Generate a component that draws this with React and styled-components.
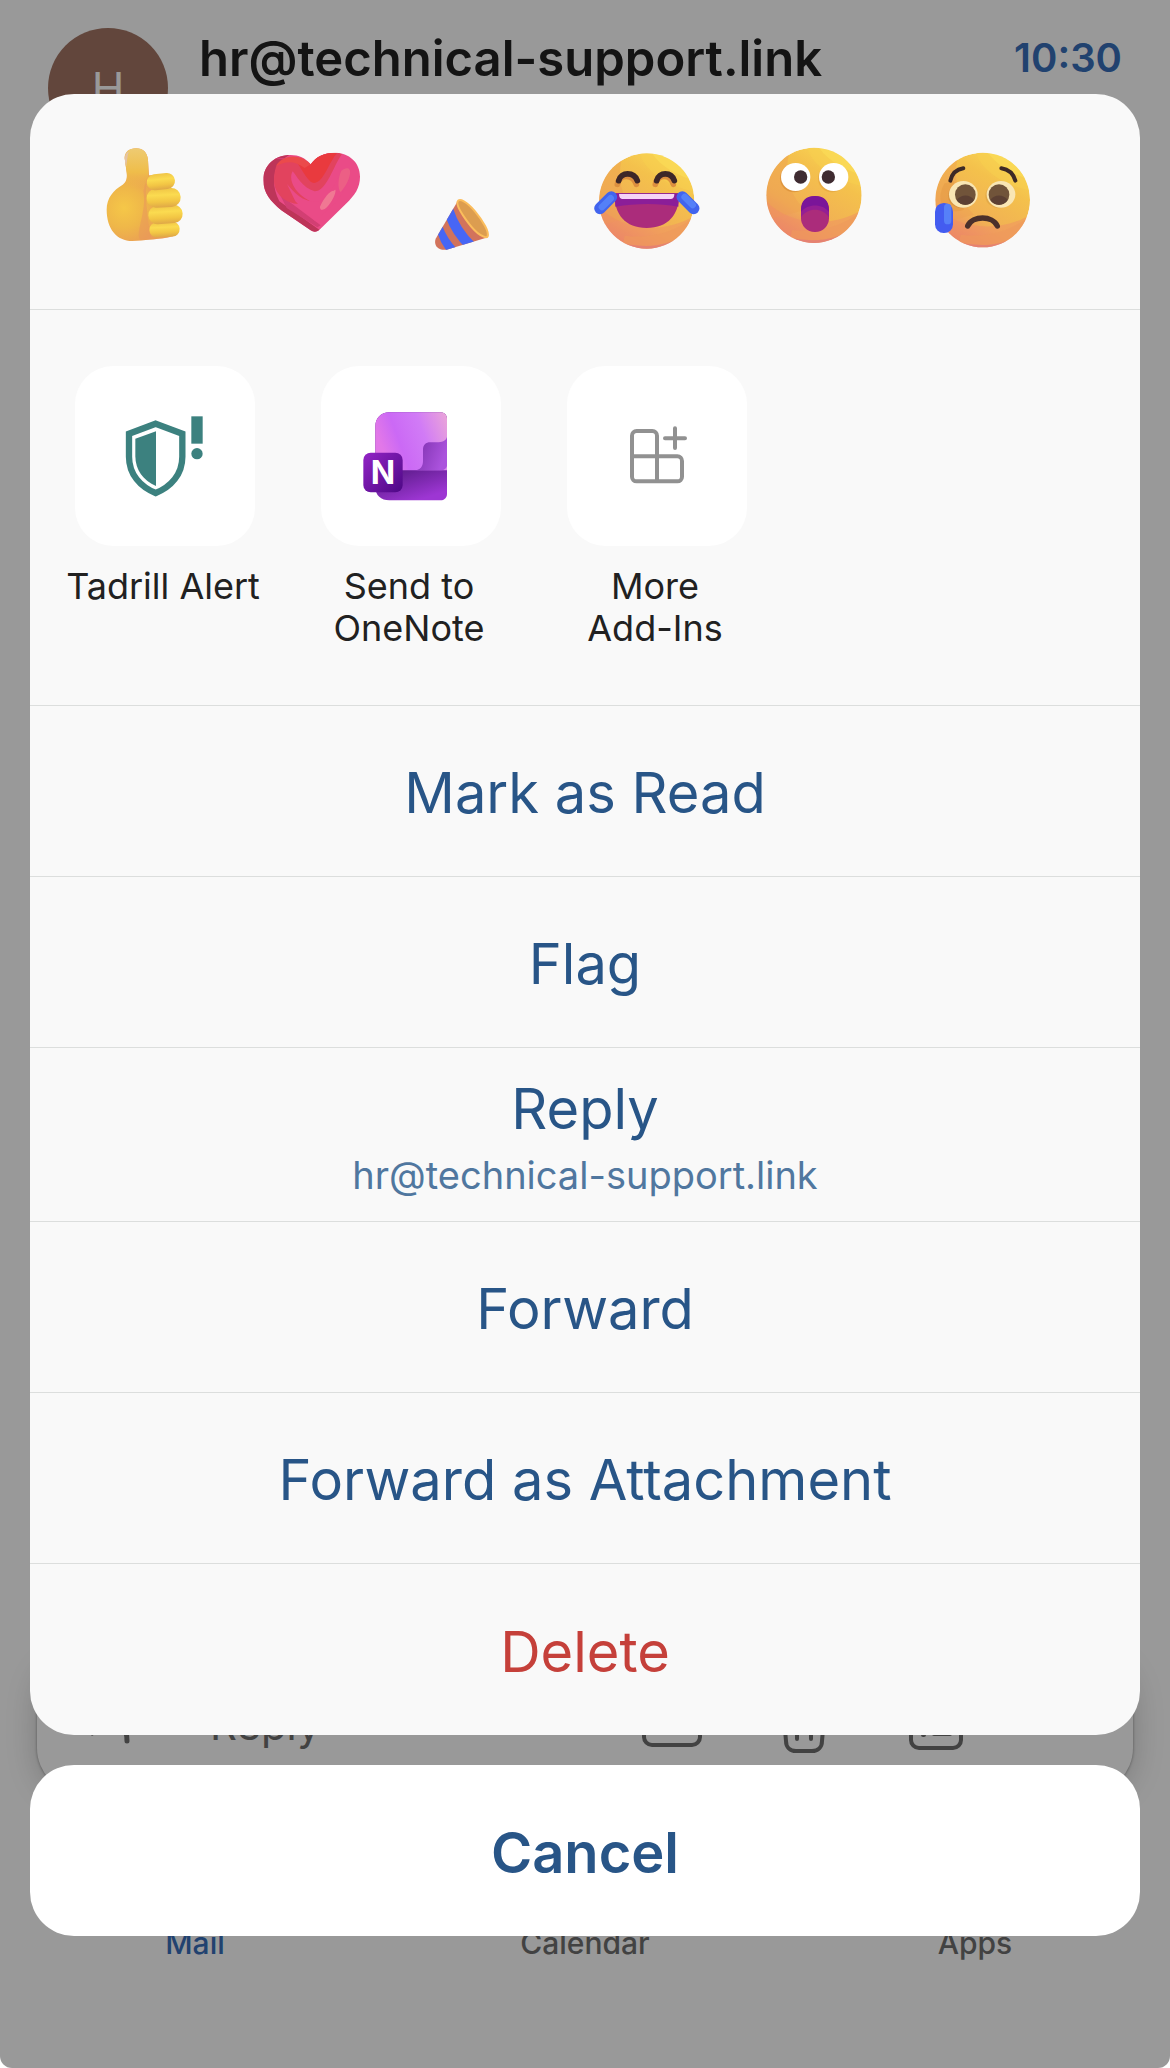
import React, { useState } from 'react';
import styled, { createGlobalStyle } from 'styled-components';

const GlobalStyle = createGlobalStyle`
  * { box-sizing: border-box; }
  body { margin: 0; background: #fff; font-family: Inter, "Liberation Sans", sans-serif; }
  button { font-family: inherit; border: none; background: none; padding: 0; cursor: pointer; }
  svg { display: block; }
`;

/* mail app behind the sheet */
const Screen = styled.div`
  display: grid;
  min-height: 100vh;
`;
const MailView = styled.div`
  grid-area: 1 / 1;
  display: flex;
  flex-direction: column;
  justify-content: space-between;
`;
const Header = styled.header`
  display: flex;
  align-items: flex-start;
  padding: 28px 48px 0;
`;
const Avatar = styled.div`
  display: flex; align-items: center; justify-content: center;
  width: 120px; height: 120px; margin-right: 31px;
  border-radius: 50%;
  background: #a37564;
  color: #fff;
  font-size: 44px;
`;
const Sender = styled.h1`
  flex: 1;
  margin: 0;
  font-size: 49px; line-height: 62px; font-weight: 600;
  color: #222;
`;
const Time = styled.time`
  font-size: 40px; line-height: 60px; font-weight: 600;
  color: #376eba;
`;
const BottomArea = styled.div`
  display: flex;
  flex-direction: column;
`;
const ReplyBar = styled.div`
  display: flex;
  align-items: center;
  gap: 72px;
  height: 140px;
  margin: 0 37px;
  padding: 0 167px 0 32px;
  border-radius: 46px;
  background: #fff;
  box-shadow: 0 0 3px rgba(0, 0, 0, 0.4), 0 4px 32px rgba(0, 0, 0, 0.2);
  color: #6e6e6e;
`;
const ReplyField = styled.button`
  flex: 1;
  display: flex; align-items: center; gap: 66px;
  font-size: 42px;
  color: inherit;
`;
const BarButton = styled.button`
  color: inherit;
`;
const TabBar = styled.nav`
  display: grid;
  grid-template-columns: repeat(3, 1fr);
  height: 274px;
  padding-top: 131px;
`;
const Tab = styled.a`
  text-align: center;
  text-decoration: none;
  font-size: 30px; line-height: 36px; font-weight: 500;
  color: ${(p) => (p.$active ? '#376eba' : '#6e6e6e')};
`;

/* action sheet */
const Scrim = styled.div`
  grid-area: 1 / 1;
  z-index: 1;
  display: flex;
  flex-direction: column;
  justify-content: flex-end;
  gap: 30px;
  padding: 94px 30px 132px;
  border-radius: 0 0 12px 12px;
  background: rgba(0, 0, 0, 0.4);
`;
const Sheet = styled.section`
  border-radius: 44px;
  background: #f9f9f9;
  overflow: hidden;
`;
const Reactions = styled.div`
  display: grid;
  grid-template-columns: repeat(6, 1fr);
  padding: 44px 72px 51px 30px;
  border-bottom: 1px solid #dcdedd;
`;
const ReactionButton = styled.button`
  display: flex;
  justify-content: center;
`;
const AddIns = styled.div`
  display: flex;
  padding: 56px 12px 56px;
  border-bottom: 1px solid #dcdedd;
`;
const AddInButton = styled.button`
  display: flex;
  flex-direction: column;
  align-items: center;
  width: 246px;
`;
const Tile = styled.span`
  width: 180px; height: 180px;
  margin-bottom: 19px;
  border-radius: 38px;
  background: #fff;
`;
const AddInLabel = styled.span`
  min-height: 84px;
  padding-right: 4px;
  font-size: 36px; line-height: 42px;
  white-space: pre-line;
  color: #212121;
`;
const Action = styled.button`
  display: flex;
  flex-direction: column;
  align-items: center;
  justify-content: center;
  width: 100%;
  min-height: 171px;
  padding: 4px 0 0;
  font-size: 56px; line-height: 80px;
  color: ${(p) => (p.$danger ? '#c5403a' : '#285587')};

  &:not(:last-child) { border-bottom: 1px solid #dcdedd; }
`;
const ReplyAction = styled(Action)`
  min-height: 174px;
  padding: 0;
`;
const ActionNote = styled.span`
  font-size: 38px; line-height: 52px;
  color: #50779f;
`;
const CancelButton = styled(Action)`
  border-radius: 44px;
  background: #fff;
  font-weight: 600;
`;

function ThumbIcon() {
  return (
    <svg width="120" height="120" viewBox="0 0 360 360" aria-hidden="true">
      <defs>
        <radialGradient id="palm" gradientUnits="userSpaceOnUse" cx="120" cy="210" r="120">
          <stop offset="0" stopColor="#f5c748" />
          <stop offset="0.5" stopColor="#efb749" />
          <stop offset="1" stopColor="#ea9d55" />
        </radialGradient>
        <linearGradient id="thumbTip" x1="0" y1="0" x2="0" y2="1">
          <stop offset="0" stopColor="#eecb72" />
          <stop offset="0.6" stopColor="#efbd4a" />
          <stop offset="1" stopColor="#efb749" stopOpacity="0" />
        </linearGradient>
        <linearGradient id="finger" x1="0" y1="0" x2="0" y2="1">
          <stop offset="0" stopColor="#f0c546" />
          <stop offset="0.35" stopColor="#fbdb50" />
          <stop offset="0.7" stopColor="#f2c544" />
          <stop offset="1" stopColor="#dfa847" />
        </linearGradient>
      </defs>
      <path d="M122 60C122 42 136 31 156 31C178 31 190 44 192 66L195 112L235 112L275 290C262 300 225 303 145 309C98 309 68 272 68 215C68 180 88 156 116 140C128 132 131 118 127 96Z" fill="url(#palm)" />
      <path d="M122 60C122 42 136 31 156 31C178 31 190 44 192 66L195 150H112C130 135 131 118 127 96Z" fill="url(#thumbTip)" />
      <path d="M123 56C126 45 130 42 134 42C130 55 129 70 127 85C123 78 122 66 123 56Z" fill="#e5c4a5" />
      <path d="M192 110C180 150 188 230 202 302L170 306C150 290 190 220 178 160Z" fill="#e9985b" opacity="0.55" />
      <rect x="196" y="252" width="91" height="45" rx="22" fill="url(#finger)" transform="rotate(-3 240 274)" />
      <rect x="193" y="202" width="103" height="55" rx="27" fill="url(#finger)" transform="rotate(-4 244 230)" />
      <rect x="188" y="151" width="102" height="57" rx="28" fill="url(#finger)" transform="rotate(-3 240 180)" />
      <rect x="188" y="107" width="85" height="48" rx="24" fill="url(#finger)" transform="rotate(-6 230 130)" />
    </svg>
  );
}

function HeartIcon() {
  return (
    <svg width="120" height="120" viewBox="0 0 360 360" aria-hidden="true">
      <defs>
        <clipPath id="heartClip">
          <path d="M176 79C160 60 140 51 116 51C68 51 34 82 34 126C34 165 56 190 88 217L176 277C184 283 196 283 204 274L282 197C308 172 324 150 324 116C324 73 291 44 248 44C216 44 192 56 176 79Z" />
        </clipPath>
      </defs>
      <g clipPath="url(#heartClip)">
        <rect width="360" height="360" fill="#ea4b87" />
        <path d="M20 40H130C70 70 48 120 82 190L206 278L180 300L20 200Z" fill="#bd3559" />
        <path d="M60 60H130C90 76 64 110 78 158L104 210L196 268L206 262L110 190C80 150 90 90 130 70Z" fill="#d23f73" />
        <path d="M72 86C90 58 130 48 176 79C215 30 250 40 270 48C245 80 225 160 188 160C150 150 132 110 122 100C110 120 120 160 172 188C130 215 66 180 66 128C66 112 68 98 72 86Z" fill="#e2435e" />
        <path d="M125 60L176 79C190 50 225 40 255 46C232 70 215 134 187 135C166 134 150 90 125 60Z" fill="#e93a3e" />
        <path d="M72 84C82 64 112 50 140 58C160 62 168 72 176 79L158 90C130 68 102 68 72 84Z" fill="#eb4a4b" />
        <path d="M105 138C130 170 165 200 205 188C245 170 262 90 290 90C304 96 286 150 250 195L190 250L130 190Z" fill="#ea4b87" />
        <path d="M246 158C256 146 250 180 228 204C214 220 203 218 204 206C216 180 232 158 246 158Z" fill="#f07893" />
        <path d="M268 98C282 86 298 88 294 108C290 130 278 148 266 162C256 154 258 118 268 98Z" fill="#ec5f85" />
      </g>
    </svg>
  );
}

function PartyIcon() {
  return (
    <svg width="120" height="120" viewBox="0 0 360 360" aria-hidden="true">
      <defs>
        <clipPath id="coneClip">
          <path d="M115 186L204 298L80 335C54 339 40 322 47 302Z" />
        </clipPath>
      </defs>
      <g clipPath="url(#coneClip)">
        <rect width="360" height="360" fill="#d2735c" />
        <path d="M98 208Q118 272 168 318L142 336Q96 290 78 240Z" fill="#4766f5" />
        <path d="M66 262Q82 304 112 334L84 344Q62 316 52 284Z" fill="#4766f5" />
      </g>
      <path d="M113 190C118 180 140 190 165 220C190 250 208 282 203 295C196 304 170 288 146 256C122 224 108 200 113 190Z" fill="#dc9d50" stroke="#fbbd5c" strokeWidth="6" />
    </svg>
  );
}

/* shared round face, each id keeps its own gradient and clip */
function Face({ id, cx, cy, r }) {
  return (
    <>
      <defs>
        <linearGradient id={`${id}Fill`} x1="0.85" y1="0.05" x2="0.3" y2="0.98">
          <stop offset="0" stopColor="#f9d855" />
          <stop offset="0.3" stopColor="#f4c14c" />
          <stop offset="0.7" stopColor="#f1b054" />
          <stop offset="1" stopColor="#ea826a" />
        </linearGradient>
        <clipPath id={`${id}Clip`}>
          <circle cx={cx} cy={cy} r={r} />
        </clipPath>
      </defs>
      <g clipPath={`url(#${id}Clip)`}>
        <circle cx={cx} cy={cy} r={r} fill={`url(#${id}Fill)`} />
        <g transform={`translate(${cx - 176} ${cy - 186})`}>
          <path d="M155 40C165 90 230 140 320 158V40Z" fill="#f8cf4e" opacity="0.5" />
          <path d="M190 40C220 90 280 112 330 130V40Z" fill="#fde35c" opacity="0.45" />
          <path d="M30 120C40 80 70 55 104 50C86 110 96 180 150 230L30 260Z" fill="#eda052" opacity="0.45" />
          <path d="M30 200C90 270 220 290 320 230L300 330H50Z" fill="#ef8b66" opacity="0.45" />
          <path d="M110 290C190 300 250 280 312 240L260 340H100Z" fill="#ee9a5c" opacity="0.6" />
          <path d="M60 300C150 330 230 330 290 285L240 340H100Z" fill="#df7381" opacity="0.55" />
        </g>
      </g>
    </>
  );
}

function LaughIcon() {
  return (
    <svg width="120" height="120" viewBox="0 0 360 360" aria-hidden="true">
      <Face id="laugh" cx={176} cy={189} r={143} />
      <path d="M91 134C98 102 138 102 148 134M205 134C212 102 250 102 259 134" transform="translate(-3 5)" fill="none" stroke="#dc8f3f" strokeWidth="17" strokeLinecap="round" />
      <path d="M92 128C99 101 138 101 148 128M206 128C213 101 250 101 259 128" fill="none" stroke="#3d2728" strokeWidth="17" strokeLinecap="round" />
      <path d="M80 166H273C275 230 240 270 176 270C112 270 78 230 80 166Z" fill="#ab2c7b" />
      <path d="M80 166H273L271 206C210 194 140 196 82 206Z" fill="#8b1e98" />
      <path d="M93 168H259C259 178 255 183 248 183H104C97 183 93 178 93 168Z" fill="#f6d3f7" />
      <path d="M36 211L70 177M283 177L317 211" stroke="#4164ee" strokeWidth="35" strokeLinecap="round" />
      <path d="M42 207L68 181M290 177L314 201" stroke="#5480f8" strokeWidth="20" strokeLinecap="round" />
    </svg>
  );
}

function SurprisedIcon() {
  return (
    <svg width="120" height="120" viewBox="0 0 360 360" aria-hidden="true">
      <Face id="surprised" cx={174} cy={172} r={143} />
      <circle cx="114" cy="121" r="42" fill="#d98f38" opacity="0.7" />
      <circle cx="228" cy="121" r="42" fill="#e2a13d" opacity="0.6" />
      <ellipse cx="119" cy="117" rx="44" ry="42" fill="#fff" />
      <ellipse cx="233" cy="117" rx="44" ry="42" fill="#fff" />
      <circle cx="134" cy="117" r="20" fill="#3f2c31" />
      <circle cx="217" cy="117" r="20" fill="#3f2c31" />
      <rect x="135" y="174" width="84" height="108" rx="41" fill="#ab2c7b" />
      <path d="M135 232V215C135 187 152 174 177 174C202 174 219 187 219 215V232C200 205 154 205 135 232Z" fill="#7a1599" />
      <path d="M135 238V222C154 196 200 196 219 222V238C200 208 154 208 135 238Z" fill="#941f94" />
    </svg>
  );
}

function SadIcon() {
  return (
    <svg width="120" height="120" viewBox="0 0 360 360" aria-hidden="true">
      <Face id="sad" cx={176} cy={186} r={142} />
      <path d="M62 136C30 190 60 235 120 215L90 130Z" fill="#e0913b" opacity="0.35" />
      <path d="M79 128C84 108 98 94 118 91M232 91C254 94 268 108 274 128" fill="none" stroke="#3d2a26" strokeWidth="12" strokeLinecap="round" />
      <ellipse cx="114" cy="173" rx="42" ry="38" fill="#d28f3c" opacity="0.6" />
      <ellipse cx="226" cy="173" rx="42" ry="38" fill="#d9a044" opacity="0.6" />
      <ellipse cx="118" cy="169" rx="43" ry="40" fill="#f9e6b4" />
      <ellipse cx="231" cy="169" rx="43" ry="40" fill="#f9e6b4" />
      <circle cx="124" cy="170" r="31" fill="#71543a" />
      <circle cx="225" cy="170" r="31" fill="#71543a" />
      <path d="M98 186A31 31 0 0 0 150 186C140 168 110 168 98 186ZM199 186A31 31 0 0 0 251 186C240 168 210 168 199 186Z" fill="#5c4033" />
      <path d="M131 264C146 232 206 232 220 264" fill="none" stroke="#4b302b" strokeWidth="16" strokeLinecap="round" />
      <rect x="33" y="195" width="54" height="90" rx="26" fill="#435cf0" />
      <rect x="60" y="197" width="22" height="62" rx="11" fill="#5680f8" />
    </svg>
  );
}

function ShieldIcon() {
  return (
    <svg width="180" height="180" viewBox="0 0 540 540" aria-hidden="true">
      <path d="M242 173L322 203V272C322 325 288 362 242 381C196 362 162 325 162 272V203Z" fill="none" stroke="#3c817f" strokeWidth="19" />
      <path d="M243 196V360C205 344 181 312 181 270V218Z" fill="#3c817f" />
      <rect x="349" y="151" width="34" height="82" fill="#3c817f" />
      <circle cx="366" cy="263" r="17" fill="#3c817f" />
    </svg>
  );
}

function OneNoteIcon() {
  return (
    <svg width="180" height="180" viewBox="0 0 540 540" aria-hidden="true">
      <defs>
        <linearGradient id="noteTop" x1="0" y1="0.3" x2="1" y2="0">
          <stop offset="0" stopColor="#e278e8" />
          <stop offset="0.25" stopColor="#cb69f5" />
          <stop offset="0.6" stopColor="#d17bf6" />
          <stop offset="1" stopColor="#eba6d8" />
        </linearGradient>
        <linearGradient id="noteMid" x1="0" y1="0" x2="1" y2="0.4">
          <stop offset="0" stopColor="#7a2daa" />
          <stop offset="1" stopColor="#ab53dd" />
        </linearGradient>
        <linearGradient id="noteBottom" gradientUnits="userSpaceOnUse" x1="260" y1="313" x2="290" y2="403">
          <stop offset="0" stopColor="#641f93" />
          <stop offset="1" stopColor="#9d36d3" />
        </linearGradient>
        <linearGradient id="noteBadge" x1="0" y1="0" x2="1" y2="1">
          <stop offset="0" stopColor="#9324c6" />
          <stop offset="1" stopColor="#4d0885" />
        </linearGradient>
      </defs>
      <path d="M205 139H358C370 139 378 147 378 159V383C378 395 370 403 358 403H205C180 403 163 388 163 363V181C163 156 180 139 205 139Z" fill="url(#noteBottom)" />
      <path d="M205 139H358C370 139 378 147 378 159V313H163V181C163 156 180 139 205 139Z" fill="url(#noteTop)" />
      <path d="M378 213C374 226 362 229 348 229H328C314 229 306 237 306 251V285C306 301 298 313 280 313H360C370 313 376 307 378 300Z" fill="url(#noteMid)" />
      <rect x="127" y="260" width="118" height="119" rx="22" fill="url(#noteBadge)" />
      <text x="186" y="354" textAnchor="middle" fontFamily="Inter, sans-serif" fontWeight="700" fontSize="96" fill="#fff">N</text>
    </svg>
  );
}

function MoreAddInsIcon() {
  return (
    <svg width="180" height="180" viewBox="0 0 540 540" fill="none" stroke="#919191" strokeWidth="12" strokeLinecap="round" aria-hidden="true">
      <path d="M195 271V209C195 201 201 195 209 195H256C264 195 270 201 270 209V271M195 271V332C195 340 201 346 209 346H331C339 346 345 340 345 332V285C345 277 339 271 331 271H195M270 271V346" />
      <path d="M324 187V246M294 217H354" />
    </svg>
  );
}

function ReplyArrowIcon() {
  return (
    <svg width="75" height="60" viewBox="-13 0 75 60" fill="none" stroke="currentColor" strokeWidth="5" strokeLinecap="round" aria-hidden="true">
      <path d="M10 13L-4 26L10 39M-4 26H28C39 26 45 33 45 47" />
    </svg>
  );
}

function MailIcon() {
  return (
    <svg width="60" height="60" viewBox="0 0 60 60" fill="none" stroke="currentColor" strokeWidth="4" aria-hidden="true">
      <rect x="2" y="9" width="56" height="42" rx="8" />
      <path d="M2 19L30 34L58 19" />
    </svg>
  );
}

function TrashIcon() {
  return (
    <svg width="60" height="60" viewBox="0 0 60 60" fill="none" stroke="currentColor" strokeWidth="4" strokeLinecap="round" aria-hidden="true">
      <path d="M8 10H52M22 10C22 0 38 0 38 10M9 12L12 47C12 53 16 57 22 57H38C44 57 48 53 48 47L51 12M23 24V45M37 24V45" />
    </svg>
  );
}

function ListIcon() {
  return (
    <svg width="60" height="60" viewBox="0 0 60 60" fill="none" stroke="currentColor" strokeWidth="4" strokeLinecap="round" aria-hidden="true">
      <rect x="5" y="4" width="50" height="50" rx="8" />
      <path d="M5 16H55M17 28H18M28 28H44M17 41H18M28 40H44" />
    </svg>
  );
}

const reactions = [
  { label: 'Like', Icon: ThumbIcon },
  { label: 'Love', Icon: HeartIcon },
  { label: 'Celebrate', Icon: PartyIcon },
  { label: 'Laugh', Icon: LaughIcon },
  { label: 'Surprised', Icon: SurprisedIcon },
  { label: 'Sad', Icon: SadIcon },
];

const addIns = [
  { label: 'Tadrill Alert', Icon: ShieldIcon },
  { label: 'Send to\nOneNote', Icon: OneNoteIcon },
  { label: 'More\nAdd-Ins', Icon: MoreAddInsIcon },
];

const tabs = ['Mail', 'Calendar', 'Apps'];
const sender = 'hr@technical-support.link';

export default function App() {
  const [open, setOpen] = useState(true);
  const [tab, setTab] = useState('Mail');
  const close = () => setOpen(false);

  return (
    <>
      <GlobalStyle />
      <Screen>
        <MailView>
          <Header>
            <Avatar>H</Avatar>
            <Sender>{sender}</Sender>
            <Time>10:30</Time>
          </Header>
          <BottomArea>
            <ReplyBar>
              <ReplyField onClick={() => setOpen(true)}>
                <ReplyArrowIcon />
                Reply
              </ReplyField>
              <BarButton aria-label="Mark as unread"><MailIcon /></BarButton>
              <BarButton aria-label="Delete message"><TrashIcon /></BarButton>
              <BarButton aria-label="Archive"><ListIcon /></BarButton>
            </ReplyBar>
            <TabBar>
              {tabs.map((name) => (
                <Tab key={name} href={`#${name.toLowerCase()}`} $active={tab === name} onClick={() => setTab(name)}>
                  {name}
                </Tab>
              ))}
            </TabBar>
          </BottomArea>
        </MailView>
        {open && (
          <Scrim>
            <Sheet role="dialog" aria-label="Message actions">
              <Reactions>
                {reactions.map(({ label, Icon }) => (
                  <ReactionButton key={label} aria-label={label} onClick={close}>
                    <Icon />
                  </ReactionButton>
                ))}
              </Reactions>
              <AddIns>
                {addIns.map(({ label, Icon }) => (
                  <AddInButton key={label}>
                    <Tile><Icon /></Tile>
                    <AddInLabel>{label}</AddInLabel>
                  </AddInButton>
                ))}
              </AddIns>
              <Action onClick={close}>Mark as Read</Action>
              <Action onClick={close}>Flag</Action>
              <ReplyAction onClick={close}>
                Reply
                <ActionNote>{sender}</ActionNote>
              </ReplyAction>
              <Action onClick={close}>Forward</Action>
              <Action onClick={close}>Forward as Attachment</Action>
              <Action $danger onClick={close}>Delete</Action>
            </Sheet>
            <CancelButton onClick={close}>Cancel</CancelButton>
          </Scrim>
        )}
      </Screen>
    </>
  );
}
